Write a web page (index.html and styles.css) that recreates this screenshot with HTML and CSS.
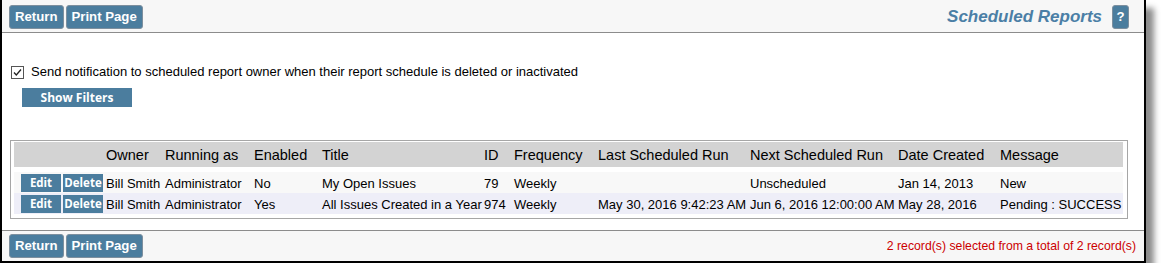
FILE: index.html
```html
<!DOCTYPE html>
<html>
<head>
<meta charset="utf-8">
<title>Scheduled Reports</title>
<link rel="stylesheet" href="styles.css">
</head>
<body>
<div class="frame">
  <div class="toolbar toolbar-top">
    <div class="btn-group">
      <button class="btn">Return</button>
      <button class="btn">Print Page</button>
    </div>
    <div class="title-group">
      <span class="page-title">Scheduled Reports</span>
      <button class="btn help">?</button>
    </div>
  </div>
  <div class="content">
    <label class="notify">
      <svg class="cb" width="13" height="13" viewBox="0 0 13 13"><rect x="0.5" y="0.5" width="12" height="12" fill="#fff" stroke="#555"/><path d="M3 6.5 L5.3 9 L10 3.5" fill="none" stroke="#222" stroke-width="1.3"/></svg>
      <span>Send notification to scheduled report owner when their report schedule is deleted or inactivated</span>
    </label>
    <button class="filters">Show Filters</button>
    <div class="grid-box">
      <table class="grid">
        <colgroup>
          <col class="c-act"><col class="c-owner"><col class="c-run"><col class="c-en"><col class="c-title"><col class="c-id"><col class="c-freq"><col class="c-last"><col class="c-next"><col class="c-date"><col class="c-msg">
        </colgroup>
        <thead>
          <tr><th></th><th>Owner</th><th>Running as</th><th>Enabled</th><th>Title</th><th>ID</th><th>Frequency</th><th>Last Scheduled Run</th><th>Next Scheduled Run</th><th>Date Created</th><th>Message</th></tr>
        </thead>
        <tbody>
          <tr class="r1">
            <td class="act"><div class="acts"><span class="ebtn">Edit</span><span class="ebtn">Delete</span></div></td>
            <td>Bill Smith</td><td>Administrator</td><td>No</td><td>My Open Issues</td><td>79</td><td>Weekly</td><td></td><td>Unscheduled</td><td>Jan 14, 2013</td><td>New</td>
          </tr>
          <tr class="r2">
            <td class="act"><div class="acts"><span class="ebtn">Edit</span><span class="ebtn">Delete</span></div></td>
            <td>Bill Smith</td><td>Administrator</td><td>Yes</td><td>All Issues Created in a Year</td><td>974</td><td>Weekly</td><td>May 30, 2016 9:42:23 AM</td><td>Jun 6, 2016 12:00:00 AM</td><td>May 28, 2016</td><td>Pending : SUCCESS</td>
          </tr>
        </tbody>
      </table>
    </div>
  </div>
  <div class="toolbar toolbar-bottom">
    <div class="btn-group">
      <button class="btn">Return</button>
      <button class="btn">Print Page</button>
    </div>
    <span class="records">2 record(s) selected from a total of 2 record(s)</span>
  </div>
</div>
</body>
</html>
```

FILE: styles.css
```css
* { box-sizing: border-box; }
body {
  margin: 0;
  background: #fff;
  font-family: "Liberation Sans", Arial, sans-serif;
  color: #000;
}
.frame {
  width: 1146px;
  height: 263px;
  border: 2px solid #000;
  border-top: 0;
  box-shadow: 8px 8px 6px rgba(0, 0, 0, 0.45);
  display: flex;
  flex-direction: column;
  background: #fff;
}
.toolbar {
  display: flex;
  justify-content: space-between;
  background: #f7f7f7;
}
.toolbar-top {
  height: 33px;
  border-bottom: 1px solid #8c8c8c;
  align-items: flex-start;
  padding: 5px 15px 0 7px;
}
.toolbar-bottom {
  height: 31px;
  border-top: 1px solid #8c8c8c;
  align-items: center;
  padding: 0 8px 0 7px;
}
.btn-group { display: flex; gap: 2px; }
.btn {
  height: 24px;
  padding: 0 5px;
  border: 1px solid #7d8f9e;
  border-radius: 3px;
  background: #4b7d9e;
  color: #fff;
  font: bold 13.2px/22px "Liberation Sans", Arial, sans-serif;
  margin: 0;
}
.title-group { display: flex; align-items: center; gap: 10px; }
.page-title {
  font: italic bold 17px/24px "Liberation Sans", Arial, sans-serif;
  color: #4b7fa6;
}
.help {
  width: 17px;
  padding: 0;
  text-align: center;
}
.content {
  flex: 1;
  display: flex;
  flex-direction: column;
  align-items: flex-start;
}
.notify {
  display: flex;
  align-items: center;
  gap: 7px;
  margin: 31px 0 0 9px;
  height: 16px;
  font-size: 13px;
  line-height: 16px;
}
.cb { display: block; flex: none; }
.filters {
  margin: 8px 0 0 20px;
  width: 110px;
  height: 19px;
  padding: 0;
  border: 0;
  background: #4b7d9e;
  color: #fff;
  font: bold 12px/19px "Open Sans", sans-serif;
}
.grid-box {
  margin: 33px 0 0 8px;
  width: 1118px;
  height: 79px;
  border: 1px solid #a6a6a6;
  padding: 1px 3px 0;
}
.grid {
  width: 1109px;
  table-layout: fixed;
  border-collapse: collapse;
}
.c-act { width: 91px; }
.c-owner { width: 59px; }
.c-run { width: 89px; }
.c-en { width: 68px; }
.c-title { width: 162px; }
.c-id { width: 30px; }
.c-freq { width: 84px; }
.c-last { width: 152px; }
.c-next { width: 148px; }
.c-date { width: 102px; }
.c-msg { width: 124px; }
.grid th {
  height: 30px;
  padding: 0 0 5px 1px;
  background: linear-gradient(#d3d3d3 0 25px, #fff 25px);
  border: 0;
  font-size: 14.5px;
  font-weight: normal;
  text-align: left;
  white-space: nowrap;
}
.grid td {
  height: 21px;
  padding: 1px 0 0 1px;
  font-size: 13px;
  white-space: nowrap;
}
.grid .r1 td { background: #f8f8f8; }
.grid .r2 td { background: #eeeef8; }
.grid td.act { padding-left: 7px; }
.acts { display: flex; gap: 2px; }
.ebtn {
  width: 40px;
  height: 18px;
  background: #4b7d9e;
  color: #fff;
  font: bold 11.5px/18px "Open Sans", sans-serif;
  text-align: center;
}
.records {
  color: #cc0000;
  font-size: 12.25px;
}
```
